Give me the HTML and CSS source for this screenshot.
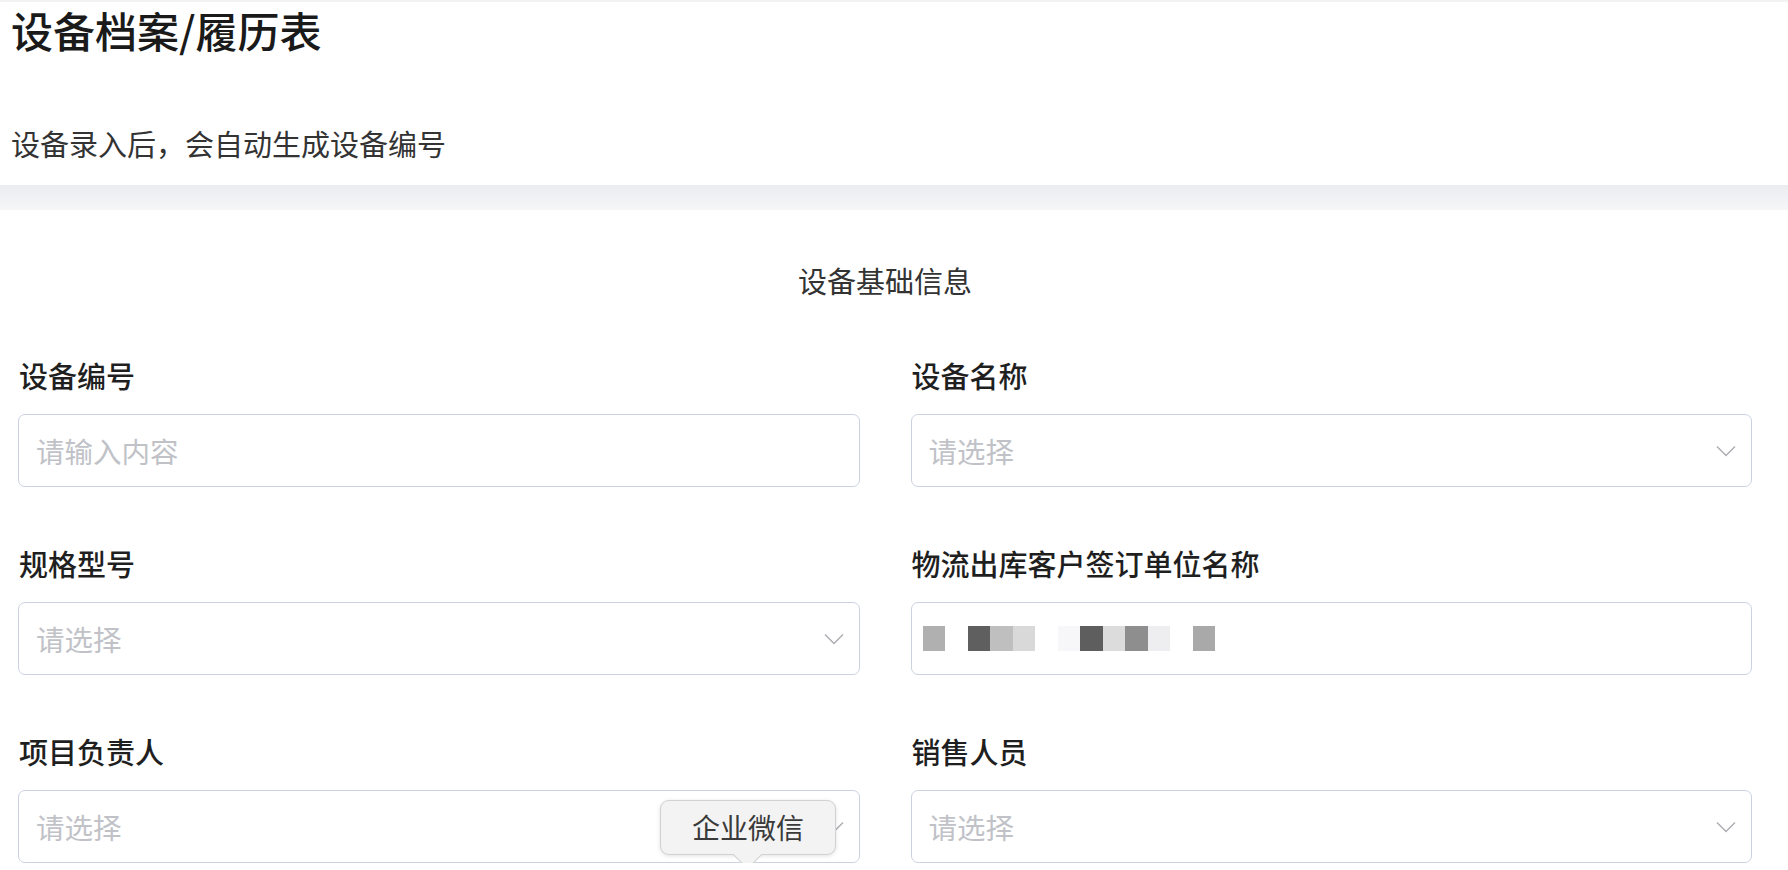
FILE: index.html
```html
<!DOCTYPE html>
<html lang="zh-CN">
<head>
  <meta charset="UTF-8">
  <title>设备档案/履历表</title>
  <link rel="stylesheet" href="styles.css">
</head>
<body>

<!-- 页头 -->
<div class="page-header">
  <h1 class="page-title">设备档案/履历表</h1>
  <p class="page-desc">设备录入后，会自动生成设备编号</p>
</div>

<div class="band"></div>

<!-- 表单 -->
<div class="form-card">
  <div class="section-title">设备基础信息</div>

  <div class="form-grid">
    <div class="form-item">
      <div class="form-label">设备编号</div>
      <div class="form-input">
        <span class="placeholder">请输入内容</span>
      </div>
    </div>
    <div class="form-item">
      <div class="form-label">设备名称</div>
      <div class="form-input select">
        <span class="placeholder">请选择</span>
        <svg class="chevron" width="20" height="12" viewBox="0 0 20 12"><path d="M1 1.5 L10 10.5 L19 1.5" fill="none" stroke="#acaeb3" stroke-width="1.5"/></svg>
      </div>
    </div>

    <div class="form-item">
      <div class="form-label">规格型号</div>
      <div class="form-input select">
        <span class="placeholder">请选择</span>
        <svg class="chevron" width="20" height="12" viewBox="0 0 20 12"><path d="M1 1.5 L10 10.5 L19 1.5" fill="none" stroke="#acaeb3" stroke-width="1.5"/></svg>
      </div>
    </div>
    <div class="form-item">
      <div class="form-label">物流出库客户签订单位名称</div>
      <div class="form-input">
        <!-- 打码内容 -->
        <div class="redact">
          <span style="background:#b0b0b0"></span>
          <span></span>
          <span style="background:#5f5f5f"></span>
          <span style="background:#bfbfbf"></span>
          <span style="background:#d9d9d9"></span>
          <span></span>
          <span style="background:#f7f7f9"></span>
          <span style="background:#5e5e5e"></span>
          <span style="background:#dcdcdc"></span>
          <span style="background:#8e8e8e"></span>
          <span style="background:#eeeef0"></span>
          <span></span>
          <span style="background:#a9a9a9"></span>
        </div>
      </div>
    </div>

    <div class="form-item">
      <div class="form-label">项目负责人</div>
      <div class="form-input select">
        <span class="placeholder">请选择</span>
        <svg class="chevron" width="20" height="12" viewBox="0 0 20 12"><path d="M1 1.5 L10 10.5 L19 1.5" fill="none" stroke="#acaeb3" stroke-width="1.5"/></svg>
      </div>
    </div>
    <div class="form-item">
      <div class="form-label">销售人员</div>
      <div class="form-input select">
        <span class="placeholder">请选择</span>
        <svg class="chevron" width="20" height="12" viewBox="0 0 20 12"><path d="M1 1.5 L10 10.5 L19 1.5" fill="none" stroke="#acaeb3" stroke-width="1.5"/></svg>
      </div>
    </div>
  </div>
</div>

<!-- 悬浮提示 -->
<div class="tooltip">企业微信<i class="tooltip-arrow"></i></div>

</body>
</html>
```

FILE: styles.css
```css
html, body {
  margin: 0;
  padding: 0;
  overflow: hidden;
}
body {
  position: relative;
  background: #fff;
  font-family: "Noto Sans CJK SC", "Noto Sans", sans-serif;
  color: #1f1f1f;
}

/* 页头 */
.page-header {
  border-top: 2px solid #f2f3f5;
  padding: 0 11px 22px;
}
.page-title {
  margin: 0;
  font-size: 42px;
  line-height: 55px;
  font-weight: 500;
  color: #1a1a1a;
}
.page-desc {
  margin: 66px 0 0;
  font-size: 29px;
  line-height: 40px;
  color: #333;
}
.band {
  height: 25px;
  background: linear-gradient(#eaecf0, #f5f6f8);
}

/* 表单 */
.form-card {
  padding: 50px 36px 0 18px;
}
.section-title {
  text-align: center;
  font-size: 29px;
  line-height: 40px;
  color: #333;
  margin-bottom: 55px;
}
.form-grid {
  display: grid;
  grid-template-columns: 1fr 1fr;
  column-gap: 51px;
  row-gap: 56px;
}
.form-label {
  font-size: 29px;
  line-height: 40px;
  font-weight: 500;
  color: #1f1f1f;
  padding-left: 1px;
  margin-bottom: 19px;
}
.form-input {
  height: 73px;
  box-sizing: border-box;
  border: 1.5px solid #cbd3e0;
  border-radius: 7px;
  padding: 0 15px 0 17px;
  display: flex;
  align-items: center;
  justify-content: space-between;
  background: #fff;
}
.placeholder {
  font-size: 28.5px;
  color: #c0c2c7;
}
.chevron {
  display: block;
}

/* 打码 */
.redact {
  display: flex;
  margin-left: -6px;
}
.redact span {
  width: 22.5px;
  height: 25px;
}

/* 提示 */
.tooltip {
  position: absolute;
  left: 660px;
  top: 800px;
  width: 176px;
  height: 55px;
  box-sizing: border-box;
  background: #f3f3f3;
  border: 1px solid #d2d2d2;
  border-radius: 9px;
  box-shadow: 0 1px 4px rgba(0, 0, 0, 0.12);
  font-size: 28px;
  line-height: 53px;
  text-align: center;
  color: #3a3a3a;
}
.tooltip-arrow {
  position: absolute;
  left: 76px;
  top: 43px;
  width: 20px;
  height: 20px;
  background: #f3f3f3;
  border-right: 1px solid #d2d2d2;
  border-bottom: 1px solid #d2d2d2;
  transform: rotate(45deg);
}
```
